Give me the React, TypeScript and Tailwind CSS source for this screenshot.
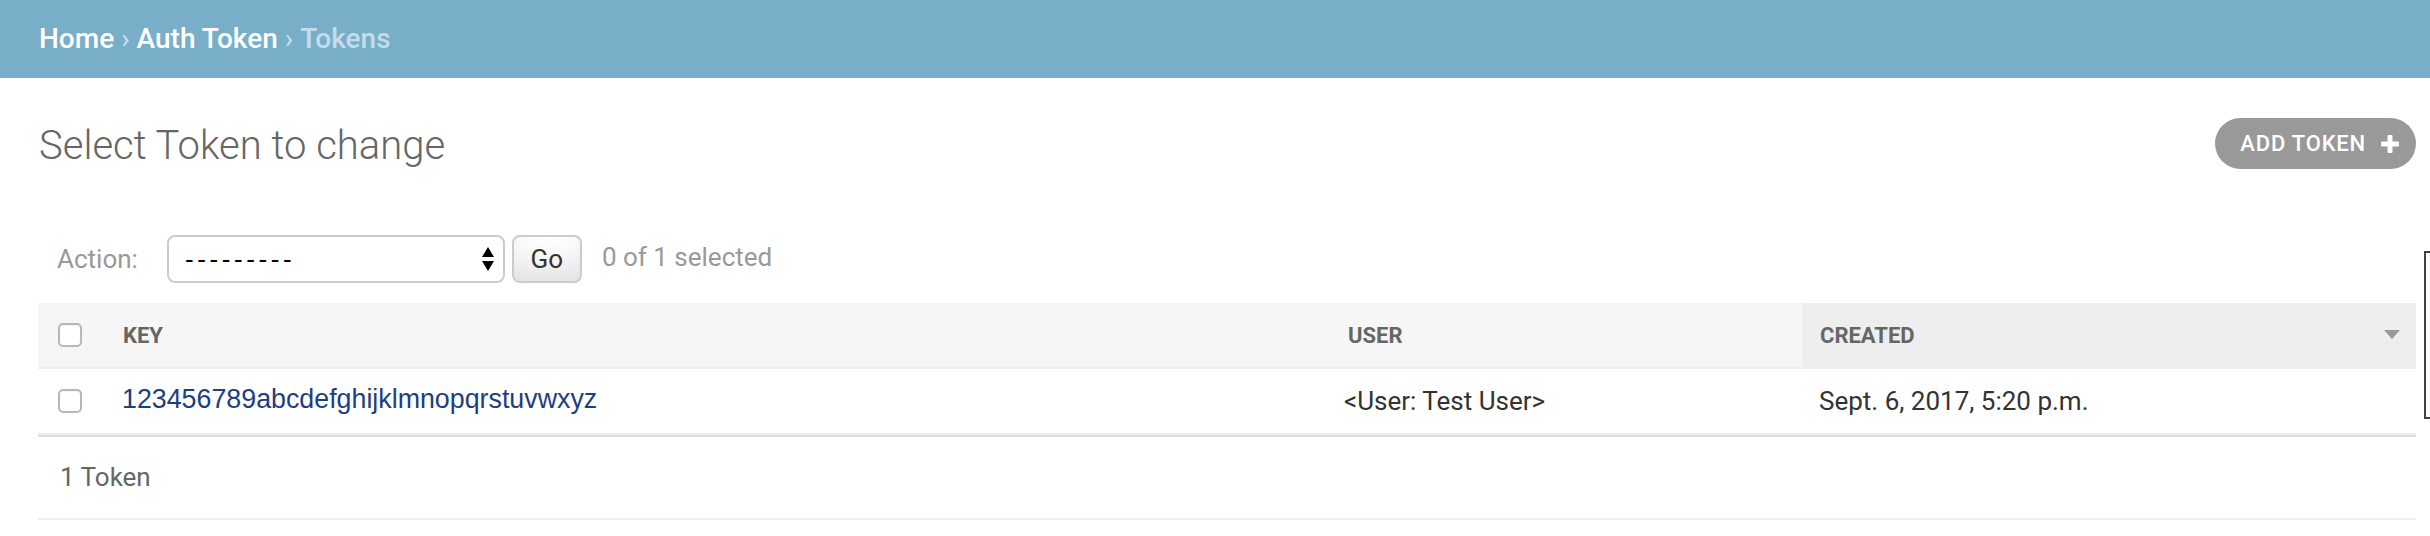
import React from "react";

const roboto = { fontFamily: "Roboto, 'Liberation Sans', sans-serif" };

function Checkbox() {
  return (
    <div className="w-[24px] h-[24px] rounded-[5px] border-2 border-[#b8b8b8] bg-white shadow-[inset_0_1px_1px_rgba(0,0,0,0.05)]" />
  );
}

export default function App() {
  return (
    <div className="relative w-[2430px] h-[536px] bg-white overflow-hidden" style={roboto}>
      {/* Breadcrumbs */}
      <div className="h-[78px] bg-[#79aec8] flex items-center pl-[39px] text-[28px] font-medium text-white">
        <span>Home</span>
        <span className="text-[#c4dce8] mx-[7px]">›</span>
        <span>Auth Token</span>
        <span className="text-[#c4dce8] mx-[7px]">›</span>
        <span className="text-[#c4dce8]">Tokens</span>
      </div>

      <div className="pl-[38px] pr-[14px]">
        {/* Title row */}
        <div className="flex justify-between items-start pt-[40px]">
          <h1 className="mt-[4px] pl-[1px] text-[40px] leading-[48px] font-light text-[#666]">
            Select Token to change
          </h1>
          <a className="h-[51px] rounded-full bg-[#999] flex items-center pl-[25px] pr-[16px] text-white text-[22px] font-medium tracking-[0.8px]">
            <span>ADD TOKEN</span>
            <svg width="20" height="18" viewBox="0 0 20 18" className="ml-[14px]">
              <rect x="7.5" y="0" width="5" height="18" rx="1" fill="white" />
              <rect x="1" y="6.5" width="18" height="5" rx="1" fill="white" />
            </svg>
          </a>
        </div>

        {/* Actions */}
        <div className="mt-[65px] flex items-center h-[48px]">
          <span className="pl-[19px] text-[26px] text-[#999]">Action:</span>
          <div className="ml-[29px] w-[338px] h-[48px] rounded-[8px] border-2 border-[#ccc] flex items-center justify-between pl-[16px] pr-[8px]">
            <span
              className="text-[26px] text-black tracking-[3.6px]"
              style={{ fontFamily: "'Liberation Sans', Arial, sans-serif" }}
            >
              ---------
            </span>
            <svg width="14" height="24" viewBox="0 0 14 24">
              <polygon points="7,0 13,10 1,10" fill="black" />
              <polygon points="1,14 13,14 7,24" fill="black" />
            </svg>
          </div>
          <div className="ml-[7px] w-[70px] h-[48px] rounded-[8px] border-2 border-[#ccc] bg-white shadow-[inset_0_-30px_40px_-20px_rgba(0,0,0,0.15)] flex items-center justify-center text-[26px] text-[#333]">
            Go
          </div>
          <span className="ml-[20px] text-[26px] text-[#999] -mt-[4px]">0 of 1 selected</span>
        </div>

        {/* Table */}
        <div className="mt-[20px]">
          <div className="grid grid-cols-[68px_1224px_472px_1fr] h-[66px] bg-[#f6f6f6] border-b-2 border-[#eee] text-[22px] font-bold text-[#666]">
            <div className="flex items-center pl-[20px]">
              <Checkbox />
            </div>
            <div className="flex items-center pl-[17px]">KEY</div>
            <div className="flex items-center pl-[18px]">USER</div>
            <div className="flex items-center justify-between pl-[18px] pr-[16px] bg-[#eee]">
              <span>CREATED</span>
              <svg width="16" height="10" viewBox="0 0 16 10">
                <polygon points="0,0 16,0 8,9" fill="#999" />
              </svg>
            </div>
          </div>
          <div className="grid grid-cols-[68px_1224px_472px_1fr] h-[66px] border-b-2 border-[#eee] text-[26px] text-[#333]">
            <div className="flex items-center pl-[20px]">
              <Checkbox />
            </div>
            <div className="flex items-center pl-[16px] -mt-[4px]">
              <a
                className="text-[#1d3e7f] text-[26.8px]"
                style={{ fontFamily: "'Liberation Sans', Arial, sans-serif" }}
              >
                123456789abcdefghijklmnopqrstuvwxyz
              </a>
            </div>
            <div className="flex items-center pl-[14px]">&lt;User: Test User&gt;</div>
            <div className="flex items-center pl-[17px]">Sept. 6, 2017, 5:20 p.m.</div>
          </div>
          <div className="h-[85px] border-t-2 border-[#ddd] border-b-2 border-b-[#eee] flex items-center pl-[22px] text-[26px] text-[#666]">
            1 Token
          </div>
        </div>
      </div>

      {/* Cut-off element at right edge */}
      <div className="absolute left-[2424px] top-[251px] w-[30px] h-[168px] border-2 border-[#444]" />
    </div>
  );
}
